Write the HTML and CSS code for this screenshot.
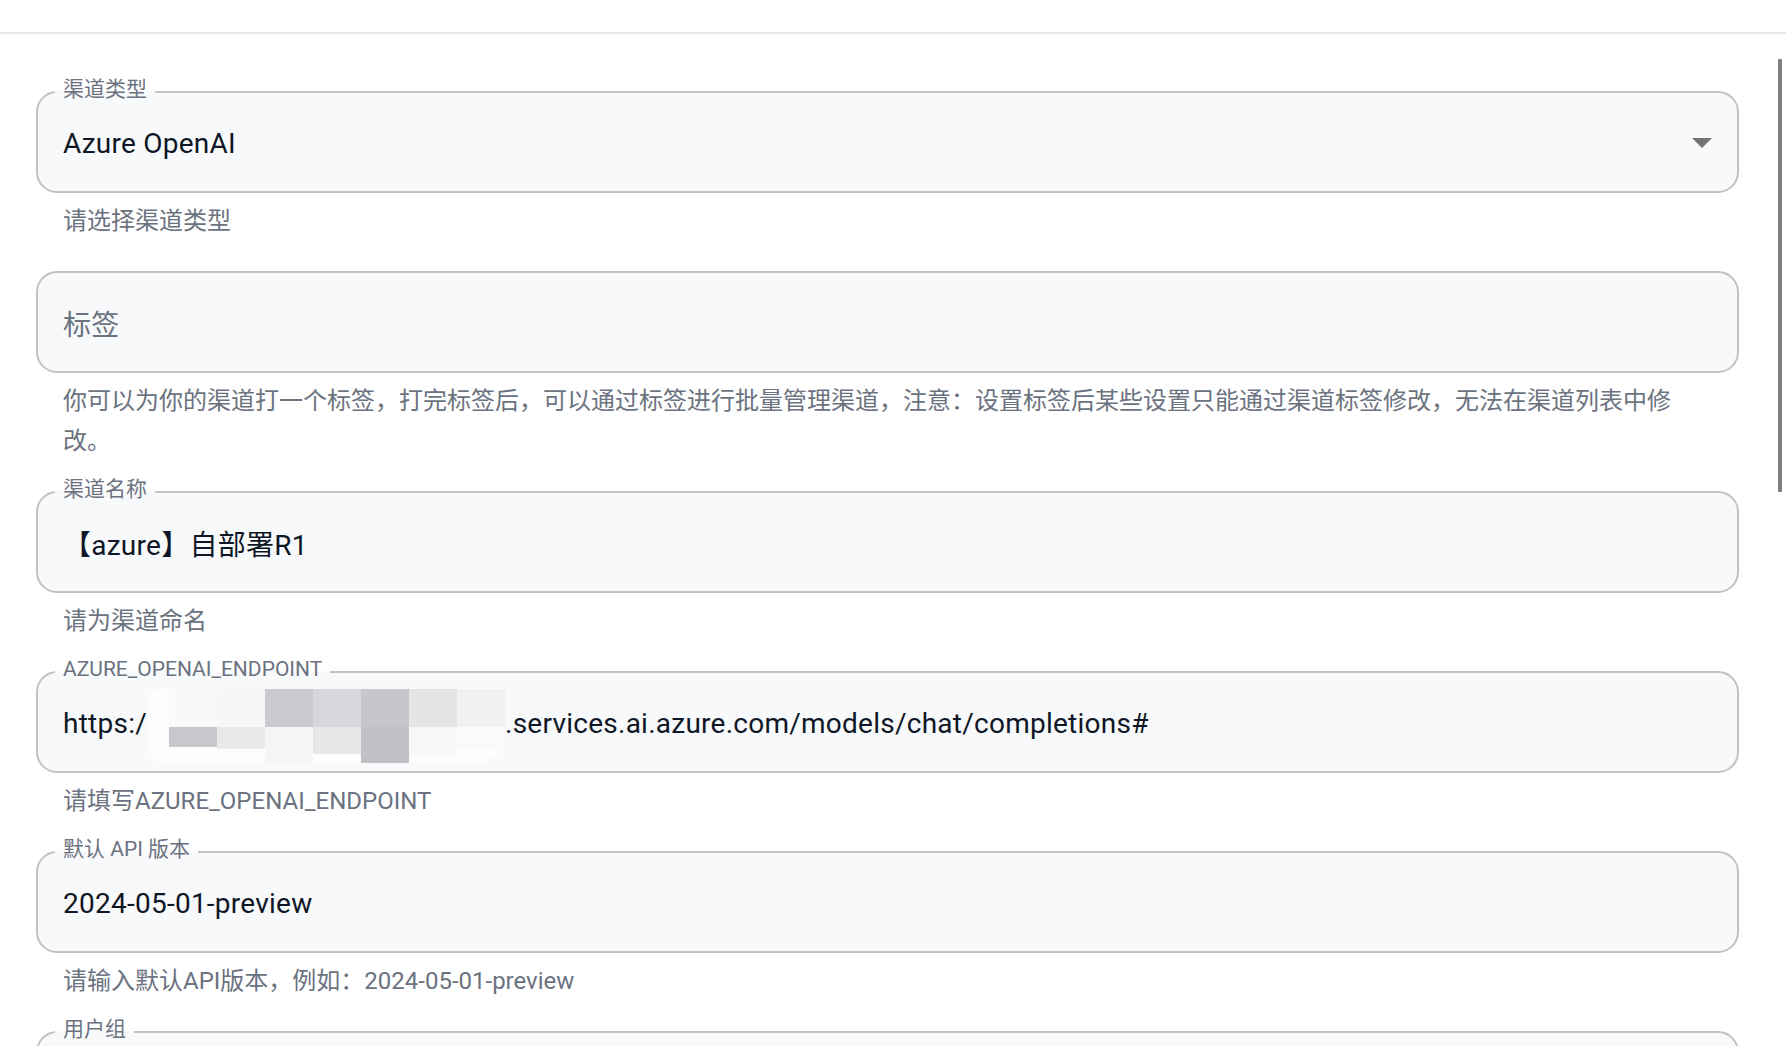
FILE: index.html
```html
<!DOCTYPE html>
<html lang="zh-CN">
<head>
    <meta charset="UTF-8">
    <meta name="viewport" content="width=device-width, initial-scale=1.0">
    <title>编辑渠道</title>
    <link rel="stylesheet" href="styles.css">
</head>
<body>

<div class="top-bar"></div>

<!-- полоса прокрутки поверх страницы -->
<div class="scroll-thumb"></div>

<form class="channel-form">
    <!-- Тип канала -->
    <div class="field">
        <fieldset class="outline">
            <legend>渠道类型</legend>
            <div class="control">
                <span class="value">Azure OpenAI</span>
                <svg class="arrow" width="20" height="10" viewBox="0 0 20 10"><path d="M0 0H20L10 10Z" fill="#757575"/></svg>
            </div>
        </fieldset>
        <p class="helper">请选择渠道类型</p>
    </div>

    <!-- Тег -->
    <div class="field">
        <fieldset class="outline">
            <legend class="blank"></legend>
            <div class="control">
                <span class="placeholder">标签</span>
            </div>
        </fieldset>
        <p class="helper long">你可以为你的渠道打一个标签，打完标签后，可以通过标签进行批量管理渠道，注意：设置标签后某些设置只能通过渠道标签修改，无法在渠道列表中修改。</p>
    </div>

    <!-- Название -->
    <div class="field">
        <fieldset class="outline">
            <legend>渠道名称</legend>
            <div class="control">
                <span class="value">【azure】自部署R1</span>
            </div>
        </fieldset>
        <p class="helper">请为渠道命名</p>
    </div>

    <!-- Адрес -->
    <div class="field">
        <fieldset class="outline">
            <legend>AZURE_OPENAI_ENDPOINT</legend>
            <div class="control">
                <span class="value">https:/</span>
                <span class="mosaic">
                    <i></i><i class="c-f9"></i><i class="c-f6"></i><i class="c-c8"></i><i class="c-d5"></i><i class="c-c5"></i><i class="c-e4"></i><i class="c-f0"></i>
                    <i></i><i class="c-c6 h20"></i><i class="c-e8 h22"></i><i class="c-f5"></i><i class="c-e5 h27"></i><i class="c-bf"></i><i class="c-f7 h30"></i><i class="c-fa h22"></i>
                </span>
                <span class="value">.services.ai.azure.com/models/chat/completions#</span>
            </div>
        </fieldset>
        <p class="helper">请填写AZURE_OPENAI_ENDPOINT</p>
    </div>

    <!-- Версия API -->
    <div class="field">
        <fieldset class="outline">
            <legend>默认 API 版本</legend>
            <div class="control">
                <span class="value">2024-05-01-preview</span>
            </div>
        </fieldset>
        <p class="helper">请输入默认API版本，例如：2024-05-01-preview</p>
    </div>

    <!-- Группа пользователей -->
    <div class="field">
        <fieldset class="outline">
            <legend>用户组</legend>
            <div class="control"></div>
        </fieldset>
    </div>
</form>

</body>
</html>
```

FILE: styles.css
```css
html, body {
    margin: 0;
    padding: 0;
}
body {
    font-family: Roboto, "Noto Sans CJK SC", sans-serif;
    background-color: #fff;
    color: #111827;
    height: 1046px;
    overflow: hidden;
}
.top-bar {
    height: 32px;
    border-bottom: 2px solid #e5e7eb;
}
.scroll-thumb {
    position: fixed;
    top: 59px;
    right: 4px;
    width: 4px;
    height: 433px;
    background-color: #7f7f7f;
    border-radius: 1px;
}
.channel-form {
    padding: 43px 47px 0 36px;
}
.field + .field {
    margin-top: 16px;
}
.outline {
    margin: 0;
    min-width: 0;
    padding: 0 25px 12px;
    border: 2px solid #c2c2c4;
    border-radius: 21px;
    background-color: #f8f9fb;
}
.outline legend {
    margin-left: -8px;
    padding: 0 8px 6px;
    font-size: 21px;
    line-height: 24px;
    color: #6b7280;
}
.outline legend.blank {
    width: 0;
    height: 30px;
    margin: 0;
    padding: 0;
}
.control {
    display: flex;
    align-items: center;
    height: 72px;
    font-size: 28px;
    letter-spacing: 0.25px;
    white-space: nowrap;
}
.value {
    color: #0f1726;
}
.placeholder {
    color: #6b7280;
}
.arrow {
    margin-left: auto;
}
.helper {
    margin: 8px 55px 0 27px;
    font-size: 24px;
    line-height: 40px;
    color: #6b7280;
}
.helper.long {
    margin-right: 30px;
}

/* замазанный кусок адреса */
.mosaic {
    flex: none;
    display: grid;
    grid-template-columns: 22px repeat(6, 48px) 48px;
    grid-template-rows: 38px 36px;
    width: 358px;
    height: 74px;
    margin-top: 6px;
    background-color: #fdfdfd;
    border-radius: 12px 30px 30px 20px;
}
.mosaic i {
    display: block;
}
.c-f9 { background-color: #f9f9fa; }
.c-f6 { background-color: #f6f6f7; }
.c-c8 { background-color: #c8cacd; }
.c-d5 { background-color: #d5d7da; }
.c-c5 { background-color: #c5c7ca; }
.c-e4 { background-color: #e4e5e7; }
.c-f0 { background-color: #f0f1f2; }
.c-c6 { background-color: #c6c8cb; }
.c-e8 { background-color: #e8e9eb; }
.c-f5 { background-color: #f5f5f6; }
.c-e5 { background-color: #e5e6e8; }
.c-bf { background-color: #bfc1c4; }
.c-f7 { background-color: #f7f7f8; }
.c-fa { background-color: #fafafa; }
.h20 { height: 20px; }
.h22 { height: 22px; }
.h27 { height: 27px; }
.h30 { height: 30px; }
```
